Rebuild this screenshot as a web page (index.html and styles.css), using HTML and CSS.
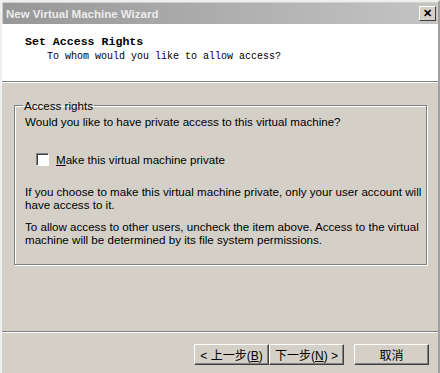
FILE: index.html
```html
<!DOCTYPE html>
<html lang="en">
<head>
  <meta charset="UTF-8" />
  <title>New Virtual Machine Wizard</title>
  <link rel="stylesheet" href="styles.css">
</head>
<body>

  <div class="window">
    <!-- Barre de titre -->
    <div class="titlebar">
      <span class="title">New Virtual Machine Wizard</span>
      <span class="close">&#x2715;</span>
    </div>

    <!-- En-tête blanc -->
    <div class="header">
      <div class="header-title">Set Access Rights</div>
      <div class="header-sub">To whom would you like to allow access?</div>
    </div>

    <div class="content">
      <fieldset class="group">
        <legend>Access rights</legend>
        <p class="question">Would you like to have private access to this virtual machine?</p>
        <label class="check">
          <span class="box"></span>
          <span><u>M</u>ake this virtual machine private</span>
        </label>
        <p class="note">If you choose to make this virtual machine private, only your user account will have access to it.</p>
        <p class="note">To allow access to other users, uncheck the item above. Access to the virtual machine will be determined by its file system permissions.</p>
      </fieldset>
    </div>

    <!-- Boutons -->
    <div class="footer">
      <div class="buttons">
        <button class="btn">&lt; 上一步(<u>B</u>)</button>
        <button class="btn">下一步(<u>N</u>) &gt;</button>
        <button class="btn cancel">取消</button>
      </div>
    </div>
  </div>

</body>
</html>
```

FILE: styles.css
```css
body {
  margin: 0;
  background: #fff;
  font-family: 'Liberation Sans', Arial, sans-serif;
  font-size: 11.6px;
  color: #000;
}

.window {
  width: 440px;
  height: 373px;
  box-sizing: border-box;
  background: #d4d0c8;
  border-left: 2px solid #eeeeee;
  border-top: 2px solid #eeeeee;
  border-right: 2px solid #a0a0a0;
  display: flex;
  flex-direction: column;
}

/* Barre de titre */
.titlebar {
  height: 21px;
  margin: 1px 1px 0 1px;
  background: linear-gradient(to right, #979797, #c4c4c4);
  display: flex;
  align-items: center;
  justify-content: space-between;
  padding: 0 1px 0 3px;
}

.title {
  color: #ececec;
  font-family: 'Liberation Sans', sans-serif;
  font-weight: bold;
  font-size: 11.5px;
}

.close {
  width: 15px;
  height: 13px;
  background: #d4d0c8;
  border: 1px solid;
  border-color: #fff #404040 #404040 #fff;
  font-size: 11px;
  font-weight: bold;
  line-height: 13px;
  text-align: center;
  color: #000;
}

/* En-tête */
.header {
  height: 58px;
  background: #fff;
  border-bottom: 1px solid #808080;
  box-shadow: 0 1px 0 #fff;
  padding: 10px 0 0 23px;
  box-sizing: border-box;
  font-family: 'Liberation Mono', 'Noto Sans CJK SC', monospace;
}

.header-title {
  font-weight: bold;
  font-size: 11.6px;
  line-height: 15px;
}

.header-sub {
  font-size: 10px;
  line-height: 15px;
  padding-left: 22px;
}

/* Contenu */
.content {
  flex: 1;
  padding: 17px 11px 0 12px;
}

.group {
  margin: 0;
  height: 166px;
  box-sizing: border-box;
  border: 1px solid #808080;
  box-shadow: 1px 1px 0 #fff, inset 1px 1px 0 #fff;
  padding: 1px 0 0 10px;
}

.group legend {
  padding: 0 1px;
  margin-left: -2px;
}

.question {
  margin: 2px 0 0 0;
  line-height: 13px;
}

.check {
  display: flex;
  align-items: center;
  gap: 7px;
  margin: 25px 0 0 11px;
  line-height: 13px;
}

.box {
  width: 11px;
  height: 11px;
  background: #fff;
  border: 1px solid;
  border-color: #808080 #fff #fff #808080;
  box-shadow: inset 1px 1px 0 #404040;
}

.note {
  margin: 19px 0 0 0;
  line-height: 13px;
}

.note + .note {
  margin-top: 9px;
}

/* Pied */
.footer {
  height: 41px;
  border-top: 1px solid #808080;
  box-shadow: inset 0 1px 0 #fff;
}

.buttons {
  display: flex;
  justify-content: flex-end;
  padding: 12px 9px 0 0;
}

.btn {
  width: 75px;
  height: 21px;
  padding: 0;
  background: #d4d0c8;
  border: 1px solid;
  border-color: #fff #404040 #404040 #fff;
  box-shadow: inset -1px -1px 0 #808080;
  font-family: 'Liberation Sans', 'Noto Sans CJK SC', sans-serif;
  font-size: 12px;
  color: #000;
}

.cancel {
  margin-left: 10px;
}
```
